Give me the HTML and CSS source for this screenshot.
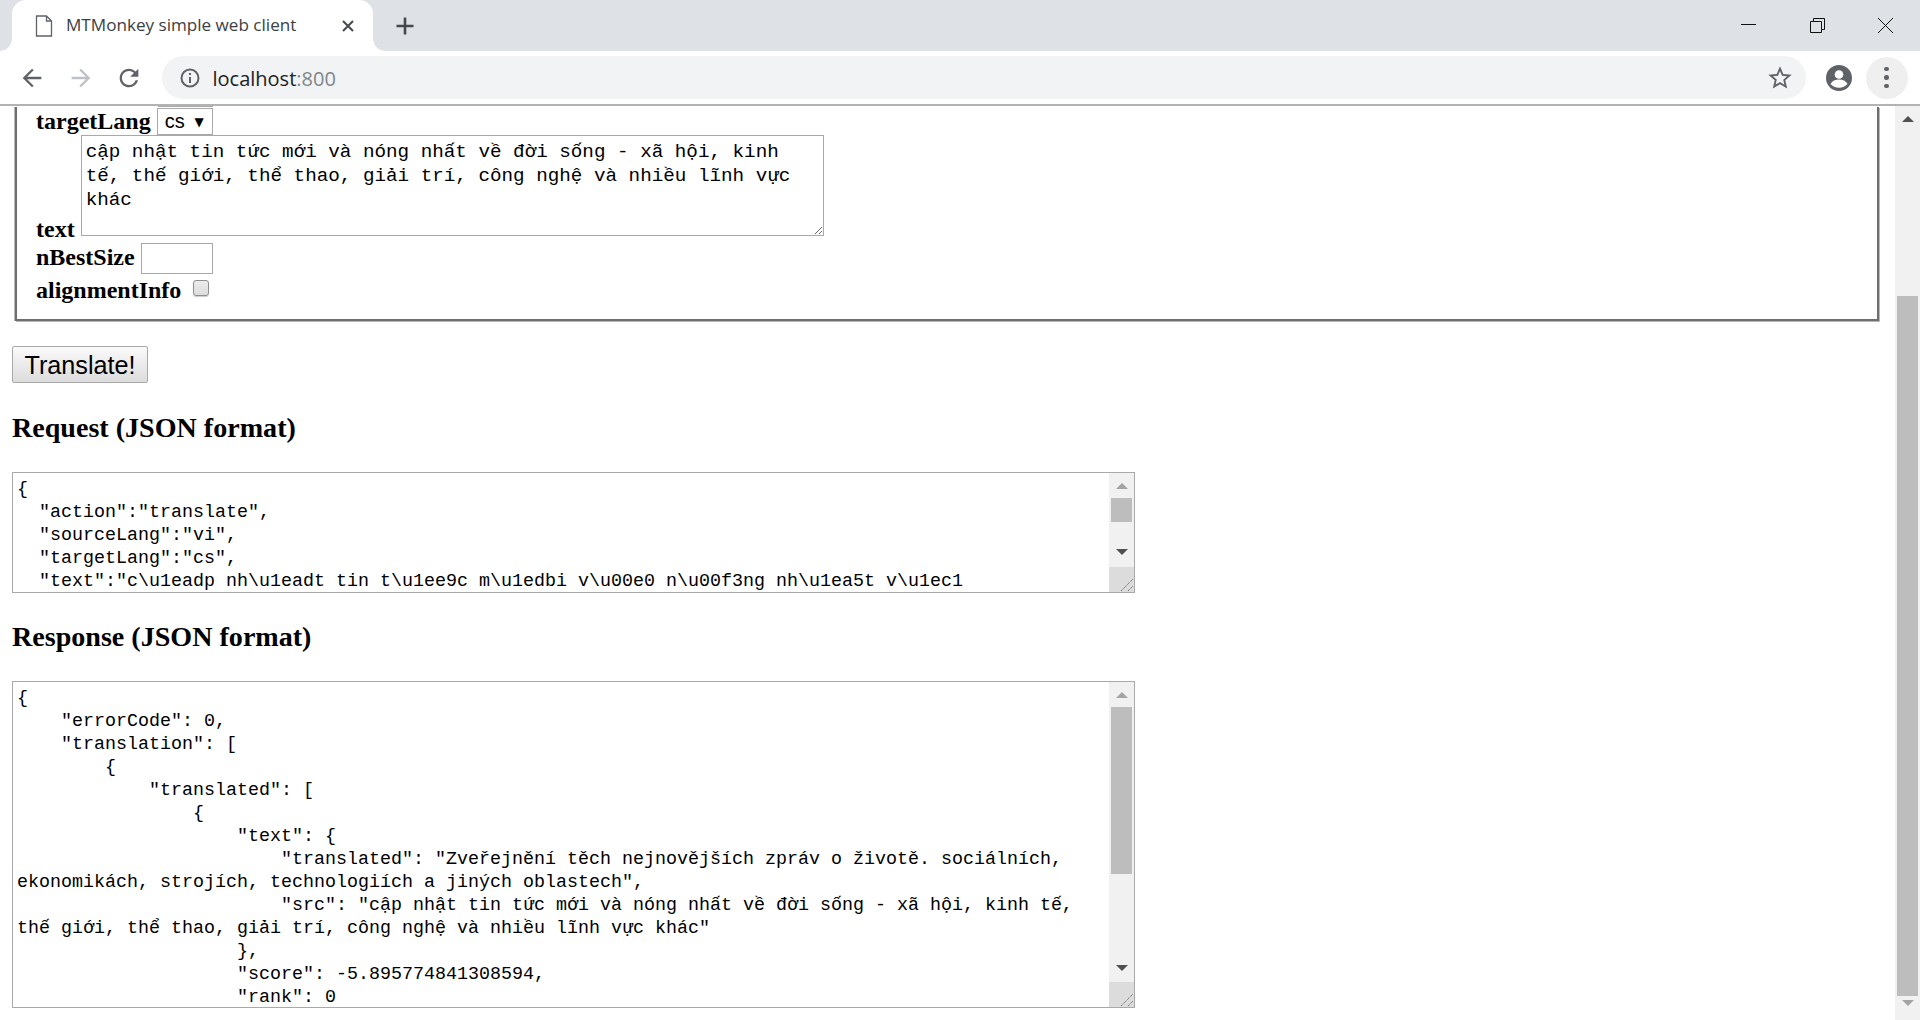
FILE: index.html
```html
<!DOCTYPE html>
<html lang="en">
<head>
<meta charset="utf-8">
<title>MTMonkey simple web client</title>
<link rel="stylesheet" href="styles.css">
</head>
<body>
<div class="window">
  <header class="tabstrip">
    <div class="tab">
      <svg class="tab-doc" viewBox="0 0 18 22" width="18" height="22"><path d="M1.5 1h10l5 5v15h-15z" fill="none" stroke="#5f6368" stroke-width="1.3"/><path d="M11.5 1v5h5" fill="none" stroke="#5f6368" stroke-width="1.3"/></svg>
      <span class="tab-title">MTMonkey simple web client</span>
      <svg class="tab-close" viewBox="0 0 14 14" width="14" height="14"><path d="M2 2l10 10M12 2L2 12" stroke="#45484c" stroke-width="2"/></svg>
    </div>
    <svg class="new-tab" viewBox="0 0 20 20" width="20" height="20"><path d="M10 1.500v17M1.500 10h17" stroke="#45484c" stroke-width="2.600"/></svg>
    <div class="win-controls">
      <svg viewBox="0 0 15 15" width="15" height="15"><path d="M0 6.500h15" stroke="#111" stroke-width="1"/></svg>
      <svg viewBox="0 0 15 15" width="15" height="15"><path d="M.5 3.500h11v11H.5zM3.500 3.500V.5h11v11h-3" fill="none" stroke="#111" stroke-width="1"/></svg>
      <svg viewBox="0 0 15 15" width="15" height="15"><path d="M0 0l15 15M15 0L0 15" stroke="#111" stroke-width="1"/></svg>
    </div>
  </header>

  <nav class="toolbar">
    <svg class="tool" viewBox="0 0 24 24" width="28" height="28"><path fill="#5f6368" d="M20 11H7.830l5.590-5.590L12 4l-8 8 8 8 1.410-1.410L7.830 13H20v-2z"/></svg>
    <svg class="tool" viewBox="0 0 24 24" width="28" height="28"><path fill="#bdc1c6" d="M4 11h12.170l-5.590-5.590L12 4l8 8-8 8-1.410-1.410L16.170 13H4v-2z"/></svg>
    <svg class="tool" viewBox="0 0 24 24" width="28" height="28"><path fill="#5f6368" d="M17.650 6.350A7.950 7.950 0 0 0 12 4c-4.420 0-7.990 3.580-7.990 8s3.570 8 7.990 8c3.730 0 6.840-2.550 7.730-6h-2.080A5.990 5.990 0 0 1 12 18c-3.310 0-6-2.690-6-6s2.690-6 6-6c1.660 0 3.140.69 4.220 1.780L13 11h7V4l-2.350 2.350z"/></svg>
    <div class="omnibox">
      <svg class="info" viewBox="0 0 20 20" width="20" height="20"><circle cx="10" cy="10" r="8.500" fill="none" stroke="#5f6368" stroke-width="2"/><path d="M10 9v6M10 5v2" stroke="#5f6368" stroke-width="2"/></svg>
      <span class="url">localhost<span class="url-port">:800</span></span>
      <svg class="star" viewBox="0 0 24 24" width="28" height="28"><path fill="#5f6368" d="M22 9.240l-7.190-.62L12 2 9.190 8.630 2 9.240l5.460 4.730L5.820 21 12 17.270 18.180 21l-1.630-7.030L22 9.240zM12 15.400l-3.760 2.270 1-4.280-3.320-2.880 4.380-.38L12 6.100l1.710 4.040 4.380.38-3.320 2.880 1 4.280L12 15.400z"/></svg>
    </div>
    <svg class="account" viewBox="0 0 26 26" width="26" height="26"><circle cx="13" cy="13" r="13" fill="#5f6368"/><circle cx="13" cy="9.500" r="4.300" fill="#fff"/><path d="M4.500 19c1.500-3.200 5-4.500 8.500-4.500s7 1.300 8.500 4.500c-2 2.400-5 3.800-8.500 3.800S6.500 21.400 4.500 19z" fill="#fff"/></svg>
    <div class="menu"><i></i><i></i><i></i></div>
  </nav>

  <div class="viewport">
    <main class="page">
      <div class="clipped-select"></div>
      <form class="params">
        <div class="row row-target"><label class="lbl">targetLang</label><span class="select">cs <span class="select-arrow">▼</span></span></div>
        <div class="row row-text"><label class="lbl">text</label><textarea class="text-input" wrap="off" readonly>cập nhật tin tức mới và nóng nhất về đời sống - xã hội, kinh
tế, thế giới, thể thao, giải trí, công nghệ và nhiều lĩnh vực
khác</textarea></div>
        <div class="row row-nbest"><label class="lbl">nBestSize</label><input class="num-input" type="text"></div>
        <div class="row row-align"><label class="lbl">alignmentInfo</label><span class="check"></span></div>
      </form>
      <button class="go" type="button">Translate!</button>
      <h3 class="heading heading-req">Request (JSON format)</h3>
      <div class="panel panel-req">
        <textarea class="json" wrap="off" readonly>{
  "action":"translate",
  "sourceLang":"vi",
  "targetLang":"cs",
  "text":"c\u1eadp nh\u1eadt tin t\u1ee9c m\u1edbi v\u00e0 n\u00f3ng nh\u1ea5t v\u1ec1</textarea>
        <div class="vbar">
          <span class="arrow arrow-up arrow-light"></span>
          <span class="thumb thumb-req"></span>
          <span class="arrow arrow-down arrow-dark"></span>
        </div>
        <svg class="grip" viewBox="0 0 25 25" width="25" height="25"><rect width="25" height="25" fill="#dcdcdc"/><path d="M12 24L24 12M19 24l5-5" stroke="#777" stroke-width="1" stroke-dasharray="1.500 .5" fill="none"/></svg>
      </div>
      <h3 class="heading heading-res">Response (JSON format)</h3>
      <div class="panel panel-res">
        <textarea class="json" wrap="off" readonly>{
    "errorCode": 0,
    "translation": [
        {
            "translated": [
                {
                    "text": {
                        "translated": "Zveřejnění těch nejnovějších zpráv o životě. sociálních,
ekonomikách, strojích, technologiích a jiných oblastech",
                        "src": "cập nhật tin tức mới và nóng nhất về đời sống - xã hội, kinh tế,
thế giới, thể thao, giải trí, công nghệ và nhiều lĩnh vực khác"
                    },
                    "score": -5.895774841308594,
                    "rank": 0</textarea>
        <div class="vbar">
          <span class="arrow arrow-up arrow-light"></span>
          <span class="thumb thumb-res"></span>
          <span class="arrow arrow-down arrow-dark"></span>
        </div>
        <svg class="grip" viewBox="0 0 25 25" width="25" height="25"><rect width="25" height="25" fill="#dcdcdc"/><path d="M12 24L24 12M19 24l5-5" stroke="#777" stroke-width="1" stroke-dasharray="1.500 .5" fill="none"/></svg>
      </div>
    </main>
    <aside class="vbar vbar-page">
      <span class="arrow arrow-up arrow-dark"></span>
      <span class="thumb thumb-page"></span>
      <span class="arrow arrow-down arrow-light"></span>
    </aside>
  </div>
</div>
</body>
</html>
```
FILE: styles.css
```css
* { box-sizing: border-box; }
html, body { margin: 0; height: 100%; background: #fff; overflow: hidden; }

.window { display: flex; flex-direction: column; height: 1020px; }

/* browser chrome */
.tabstrip { height: 51px; background: #dee1e6; display: flex; align-items: center; flex: none; }
.tab { width: 361px; height: 51px; margin-left: 12px; background: #fff; border-radius: 14px 14px 0 0; display: flex; align-items: center; padding-left: 23px; position: relative; }
.tab::before, .tab::after { content: ""; position: absolute; bottom: 0; width: 12px; height: 12px; }
.tab::before { left: -12px; background: radial-gradient(circle at 0 0, #dee1e6 11.500px, #fff 12px); }
.tab::after { right: -12px; background: radial-gradient(circle at 100% 0, #dee1e6 11.500px, #fff 12px); }
.tab-doc { flex: none; }
.tab-title { margin: 0 0 2px 13px; font: 17.100px/22px "Open Sans", sans-serif; color: #3c4043; white-space: nowrap; width: 275px; }
.tab-close { flex: none; }
.new-tab { margin-left: 22px; flex: none; }
.win-controls { margin-left: auto; display: flex; gap: 53.500px; padding-right: 27px; }
.win-controls svg { display: block; }

.toolbar { height: 55px; flex: none; background: #fff; border-bottom: 2px solid #b3b3b3; display: flex; align-items: center; padding-left: 18px; }
.tool { flex: none; margin-right: 20.500px; }
.omnibox { width: 1644px; height: 43px; margin-left: -2px; border-radius: 22px; background: #f1f3f4; display: flex; align-items: center; padding-left: 18px; flex: none; }
.info { flex: none; }
.url { margin: 2px 0 0 13px; font: 20px/26px "Open Sans", sans-serif; color: #202124; }
.url-port { color: #80868b; }
.star { margin-left: auto; margin-right: 12px; flex: none; }
.account { margin-left: 20px; flex: none; }
.menu { width: 42px; height: 42px; border-radius: 50%; background: #efefef; margin-left: 14px; flex: none; display: flex; flex-direction: column; align-items: center; justify-content: center; gap: 4px; }
.menu i { width: 4.500px; height: 4.500px; border-radius: 50%; background: #5f6368; }

/* page */
.viewport { flex: 1; min-height: 0; display: flex; }
.page { flex: 1; min-width: 0; overflow: hidden; padding-left: 12px; font-family: "Liberation Serif", serif; color: #000; }

.clipped-select { width: 55px; height: 1px; margin-left: 146px; background: #a9a9a9; }

.params { width: 1864px; margin-left: 3px; height: 214px; border: solid #6e6e6e; border-width: 0 2px 2px; box-shadow: 1px 1px 0 #b8b8b8, -1px 0 0 #b8b8b8; padding-left: 19px; }
.row { display: flex; align-items: flex-end; }
.lbl { font-size: 24px; line-height: 26px; font-weight: bold; white-space: nowrap; }

.row-target { height: 28px; }
.row-target .lbl { margin-bottom: 1px; }
.select { width: 56px; height: 27px; margin-left: 6px; border: 1px solid #a9a9a9; display: flex; align-items: center; justify-content: space-between; padding: 0 8px 0 7px; font: 20px "Liberation Sans", sans-serif; }
.select-arrow { font: 12px "DejaVu Sans", sans-serif; }

.row-text { height: 101px; }
.row-text .lbl { line-height: 24px; margin-bottom: -5px; }
.text-input { width: 743px; height: 101px; margin: 0 0 0 6px; padding: 4px 4px 0; border: 1px solid #a9a9a9; border-radius: 0; outline: 0; font: 19.250px/24px "Liberation Mono", "DejaVu Sans Mono", monospace; overflow: hidden; color: #000; flex: none; }

.row-nbest { margin-top: 7px; height: 31px; }
.row-nbest .lbl { line-height: 30px; margin-bottom: 2px; }
.num-input { width: 72px; height: 31px; margin: 0 0 0 6px; padding: 0; border: 1px solid #a9a9a9; border-radius: 0; outline: 0; background: #fff; }

.row-align { margin-top: 4px; height: 28px; }
.row-align .lbl { line-height: 28px; margin-bottom: 2px; }
.check { width: 16px; height: 16px; margin: 0 0 10px 12px; border: 1px solid #8f8f8f; border-radius: 3px; background: linear-gradient(#ececec, #dcdcdc); box-shadow: 0 1px 1px #ccc; flex: none; }

.go { display: block; width: 136px; height: 37px; margin: 25px 0 0; padding: 1px 0 0; border: 1px solid #a9a9a9; border-radius: 2px; background: linear-gradient(#fafafa, #dcdcdc); font: 25.200px/35px "Liberation Sans", sans-serif; color: #000; }

.heading { margin: 0; font-size: 28.080px; line-height: 31px; font-weight: bold; }
.heading-req { margin-top: 29px; }
.heading-res { margin-top: 28px; }

.panel { width: 1123px; position: relative; border: 1px solid #a9a9a9; display: flex; background: #fff; }
.panel-req { height: 121px; margin-top: 29px; }
.panel-res { height: 327px; margin-top: 29px; }
.json { flex: 1; min-width: 0; height: 100%; margin: 0; padding: 5px 4px 0; border: 0; outline: 0; resize: none; overflow: hidden; font: 18.330px/23px "Liberation Mono", "DejaVu Sans Mono", monospace; color: #000; background: #fff; }

/* scrollbars */
.vbar { width: 25px; flex: none; background: #f1f1f1; display: flex; flex-direction: column; align-items: center; }
.vbar-page { height: 100%; }
.arrow { width: 0; height: 0; border-left: 6px solid transparent; border-right: 6px solid transparent; flex: none; }
.arrow-up { margin-top: 10px; border-bottom: 6px solid; }
.arrow-down { border-top: 6px solid; }
.arrow-light { border-top-color: #a3a3a3; border-bottom-color: #a3a3a3; }
.arrow-dark { border-top-color: #505050; border-bottom-color: #505050; }
.thumb { width: 21px; background: #bdbdbd; flex: none; }
.thumb-req { height: 24px; margin-top: 9px; }
.thumb-req + .arrow-down { margin-top: 27px; }
.thumb-res { height: 167px; margin-top: 9px; }
.thumb-res + .arrow-down { margin-top: 91px; }
.thumb-page { height: 700px; margin-top: 174px; }
.thumb-page + .arrow-down { margin-top: 4px; }

.grip { position: absolute; right: 0; bottom: 0; display: block; }
```
